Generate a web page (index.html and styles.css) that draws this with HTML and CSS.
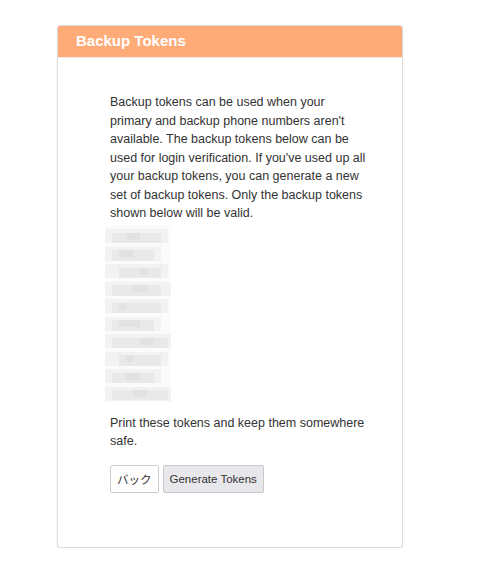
FILE: index.html
```html
<!DOCTYPE html>
<html>
<head>
<meta charset="utf-8">
<link rel="stylesheet" href="styles.css">
</head>
<body>
<div class="card">
  <div class="card-header">Backup Tokens</div>
  <div class="card-body">
    <p class="intro">Backup tokens can be used when your primary and backup phone numbers aren't available. The backup tokens below can be used for login verification. If you've used up all your backup tokens, you can generate a new set of backup tokens. Only the backup tokens shown below will be valid.</p>
    <svg class="tokens" width="66" height="176" viewBox="0 0 66 176" aria-hidden="true">
      <rect x="0" y="0" width="66" height="176" fill="#fbfbfb"/>
      <g fill="#f2f2f2">
        <rect x="0" y="3" width="63" height="14"/>
        <rect x="0" y="21" width="56" height="14"/>
        <rect x="0" y="38" width="63" height="14"/>
        <rect x="0" y="56" width="66" height="14"/>
        <rect x="0" y="73" width="63" height="14"/>
        <rect x="0" y="91" width="56" height="14"/>
        <rect x="0" y="108" width="66" height="14"/>
        <rect x="0" y="126" width="63" height="14"/>
        <rect x="0" y="143" width="56" height="14"/>
        <rect x="0" y="161" width="66" height="14"/>
      </g>
      <g fill="#e9e9e9">
        <rect x="7" y="7" width="49" height="10"/>
        <rect x="7" y="24" width="42" height="11"/>
        <rect x="14" y="42" width="42" height="10"/>
        <rect x="7" y="59" width="49" height="11"/>
        <rect x="7" y="77" width="49" height="10"/>
        <rect x="7" y="94" width="42" height="11"/>
        <rect x="7" y="112" width="56" height="10"/>
        <rect x="14" y="129" width="42" height="11"/>
        <rect x="7" y="147" width="42" height="10"/>
        <rect x="7" y="164" width="56" height="10"/>
      </g>
      <g fill="#e2e2e2">
        <rect x="21" y="7" width="14" height="7"/>
        <rect x="14" y="24" width="14" height="7"/>
        <rect x="35" y="42" width="7" height="7"/>
        <rect x="28" y="59" width="14" height="7"/>
        <rect x="14" y="77" width="7" height="7"/>
        <rect x="14" y="94" width="21" height="7"/>
        <rect x="35" y="112" width="14" height="7"/>
        <rect x="21" y="129" width="7" height="7"/>
        <rect x="21" y="147" width="14" height="7"/>
        <rect x="28" y="164" width="14" height="7"/>
      </g>
    </svg>
    <p class="note">Print these tokens and keep them somewhere safe.</p>
    <div class="actions">
      <button class="btn btn-back">バック</button>
      <button class="btn btn-gen">Generate Tokens</button>
    </div>
  </div>
</div>
</body>
</html>
```
FILE: styles.css
```css
html, body {
  margin: 0;
  padding: 0;
  background: #fff;
}
body {
  font-family: "Liberation Sans", Arial, "Noto Sans CJK JP", sans-serif;
  color: #333;
  padding: 25px 0 0 57px;
}
.card {
  width: 344px;
  height: 521px;
  border: 1px solid #dcdcdc;
  border-radius: 3px;
  box-shadow: 0 2px 2px rgba(0, 0, 0, 0.08);
  background: #fff;
  overflow: hidden;
}
.card-header {
  background: #ffab78;
  color: #fff;
  font-weight: bold;
  font-size: 15px;
  height: 31px;
  line-height: 29px;
  padding-left: 18px;
  border-bottom: 1px solid #e8e8e8;
}
.card-body {
  padding: 35px 0 0 52px;
  width: 258px;
}
.intro, .note {
  margin: 0;
  font-size: 12.5px;
  line-height: 18.5px;
}
.tokens {
  display: block;
  margin: 3px 0 0 -5px;
}
.note {
  margin-top: 12px;
}
.actions {
  display: flex;
  gap: 4px;
  margin-top: 14px;
}
.btn {
  font-family: "Liberation Sans", Arial, "Noto Sans CJK JP", sans-serif;
  font-size: 11.5px;
  color: #333;
  height: 28px;
  padding: 0 6px;
  border: 1px solid #ccc;
  border-radius: 2px;
  background: #fff;
}
.btn-gen {
  background: #e8e8ec;
  border-color: #c8c8c8;
}
```
